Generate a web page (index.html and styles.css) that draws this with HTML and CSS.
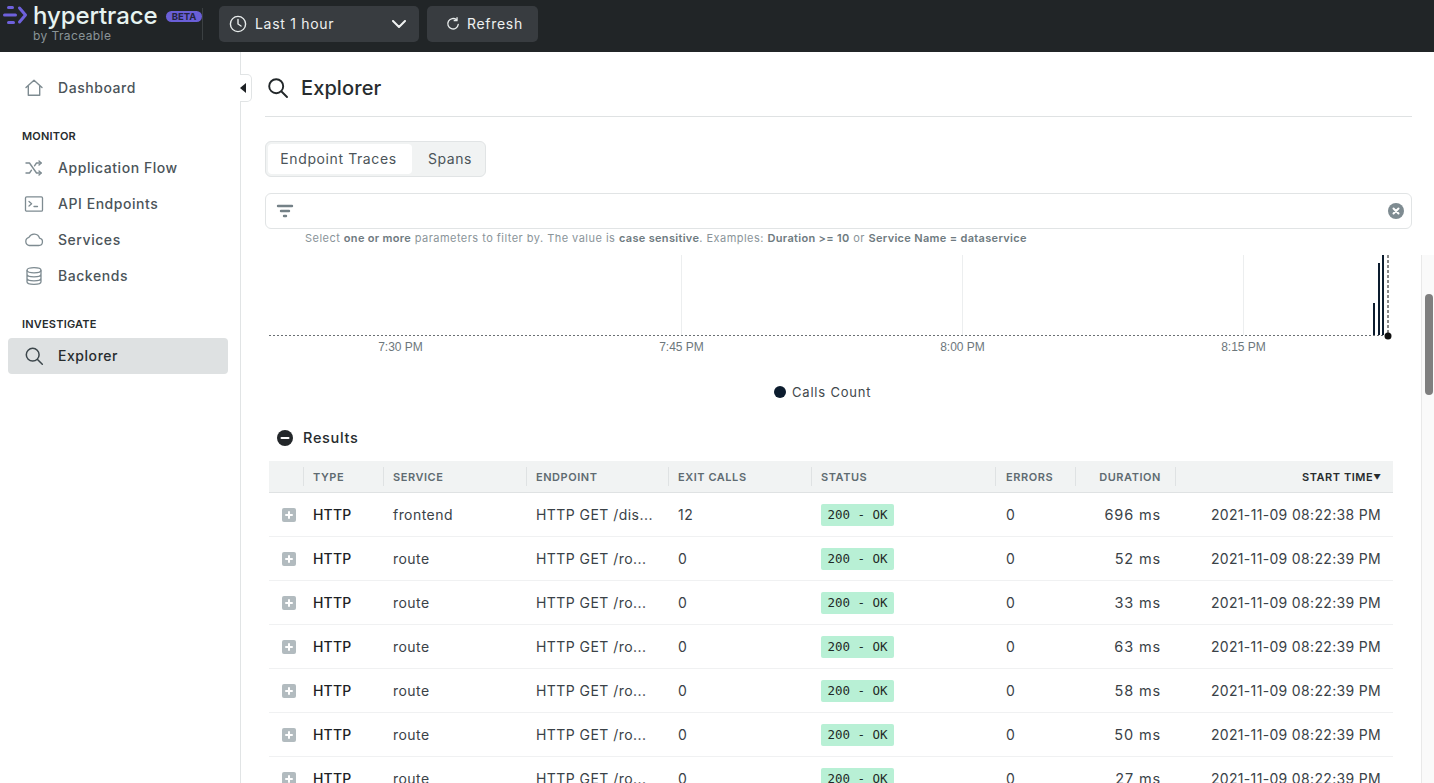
FILE: index.html
```html
<!DOCTYPE html>
<html lang="en">
<head>
<meta charset="utf-8">
<title>Hypertrace Explorer</title>
<link rel="stylesheet" href="styles.css">
</head>
<body>
<header class="topbar">
  <div class="brand">
    <svg class="brand-mark" viewBox="0 0 26 20" width="26" height="20"><g fill="none" stroke="#6e61dc" stroke-width="3" stroke-linecap="round" stroke-linejoin="round"><path d="M5.5 2.5h4"/><path d="M1.5 10h11"/><path d="M5.5 17.5h5"/><path d="M16.5 3l6 7-6 7"/></g></svg>
    <div class="brand-text">
      <div class="brand-name">hypertrace</div>
      <div class="brand-by">by Traceable</div>
    </div>
    <span class="beta">BETA</span>
  </div>
  <button class="top-btn time-btn">
    <svg viewBox="0 0 18 18" width="18" height="18"><g fill="none" stroke="#e8ecec" stroke-width="1.4" stroke-linecap="round"><circle cx="9" cy="9" r="7.6"/><path d="M9 4.5V9l3 2"/></g></svg>
    <span class="time-label">Last 1 hour</span>
    <svg viewBox="0 0 14 8" width="14" height="8"><path d="M1 1l6 6 6-6" fill="none" stroke="#f0f2f2" stroke-width="2" stroke-linecap="round" stroke-linejoin="round"/></svg>
  </button>
  <button class="top-btn refresh-btn">
    <svg viewBox="0 0 16 16" width="14" height="14"><g fill="none" stroke="#e8ecec" stroke-width="1.5" stroke-linecap="round"><path d="M14 8.5A6 6 0 1 1 12 3.2"/><path d="M12.6 .8v3.4H9.4" stroke-linejoin="round"/></g></svg>
    <span class="btn-text">Refresh</span>
  </button>
</header>

<div class="shell">
  <nav class="sidenav">
    <a class="nav-item">
      <svg class="nav-icon" viewBox="0 0 20 20"><path d="M2 9.5L10 2.2l8 7.3M4.3 8v9.3h11.4V8" fill="none" stroke="#7e8b91" stroke-width="1.4" stroke-linejoin="round" stroke-linecap="round"/></svg>
      <span>Dashboard</span>
    </a>
    <div class="nav-title nav-title-monitor">MONITOR</div>
    <a class="nav-item">
      <svg class="nav-icon" viewBox="0 0 20 20"><g fill="none" stroke="#7e8b91" stroke-width="1.4" stroke-linecap="round" stroke-linejoin="round"><path d="M2 5h3.5l7 10H17"/><path d="M2 15h3.5l2-2.8M10.5 7.8L12.5 5H17"/><path d="M15 3l2.2 2L15 7M15 13l2.2 2-2.2 2"/></g></svg>
      <span>Application Flow</span>
    </a>
    <a class="nav-item">
      <svg class="nav-icon" viewBox="0 0 20 20"><g fill="none" stroke="#7e8b91" stroke-width="1.3" stroke-linecap="round" stroke-linejoin="round"><rect x="1.5" y="2.8" width="17" height="14.4" rx="1.2"/><path d="M5 7.5l2.6 2.3L5 12M10 12.5h3.5"/></g></svg>
      <span>API Endpoints</span>
    </a>
    <a class="nav-item">
      <svg class="nav-icon" viewBox="0 0 20 20"><path d="M5.2 15.5h9.6a3.7 3.7 0 0 0 .8-7.3A5.7 5.7 0 0 0 5 7.3a4.2 4.2 0 0 0 .2 8.2z" fill="none" stroke="#7e8b91" stroke-width="1.3" stroke-linejoin="round"/></svg>
      <span>Services</span>
    </a>
    <a class="nav-item">
      <svg class="nav-icon" viewBox="0 0 20 20"><g fill="none" stroke="#7e8b91" stroke-width="1.3"><ellipse cx="10" cy="4.3" rx="7" ry="2.6"/><path d="M3 4.3v11.4c0 1.4 3.1 2.6 7 2.6s7-1.2 7-2.6V4.3M3 8.2c0 1.4 3.1 2.6 7 2.6s7-1.2 7-2.6M3 12.2c0 1.4 3.1 2.6 7 2.6s7-1.2 7-2.6"/></g></svg>
      <span>Backends</span>
    </a>
    <div class="nav-title nav-title-investigate">INVESTIGATE</div>
    <a class="nav-item active">
      <svg class="nav-icon" viewBox="0 0 20 20"><g fill="none" stroke="#3c464b" stroke-width="1.5" stroke-linecap="round"><circle cx="8.7" cy="8.7" r="6.4"/><path d="M13.5 13.5l4.8 4.8"/></g></svg>
      <span>Explorer</span>
    </a>
  </nav>
  <div class="nav-toggle"><span class="nav-toggle-arrow"></span></div>

  <main class="content">
    <div class="content-top">
      <div class="page-head">
        <svg viewBox="0 0 20 20" width="20" height="20"><g fill="none" stroke="#22272a" stroke-width="1.9" stroke-linecap="round"><circle cx="8.2" cy="8.2" r="7"/><path d="M13.5 13.5l5.5 5.5"/></g></svg>
        <h1>Explorer</h1>
      </div>
      <div class="tabs">
        <div class="tab tab-active">Endpoint Traces</div>
        <div class="tab tab-other">Spans</div>
      </div>
      <div class="filter">
        <svg viewBox="0 0 18 14" width="18" height="14"><g stroke="#748187" stroke-width="2.4" stroke-linecap="round"><path d="M2 2h14"/><path d="M5 7h8"/><path d="M8 12h2"/></g></svg>
        <svg viewBox="0 0 16 16" width="16" height="16"><circle cx="8" cy="8" r="8" fill="#7e8b91"/><path d="M5.5 5.5l5 5M10.5 5.5l-5 5" stroke="#fff" stroke-width="2" stroke-linecap="round"/></svg>
      </div>
      <p class="hint">Select <b>one or more</b> parameters to filter by. The value is <b>case sensitive</b>. Examples: <b>Duration &gt;= 10</b> or <b>Service Name = dataservice</b></p>
    </div>

    <div class="scroller">
      <svg class="chart" viewBox="0 0 1157 110" width="1157" height="110">
        <g stroke="#eceeef" stroke-width="1">
          <path d="M416.5 0v80M697.5 0v80M978.5 0v80"/>
        </g>
        <path d="M4 80.5H1123" stroke="#6a7074" stroke-width="1" stroke-dasharray="2 2"/>
        <g stroke="#0c1c2e" stroke-width="2">
          <path d="M1109 80V48M1114 80V8M1118 80V0"/>
        </g>
        <path d="M1123 0V80" stroke="#666" stroke-width="1.5" stroke-dasharray="3 2"/>
        <circle cx="1123" cy="81" r="3.5" fill="#111"/>
        <g class="axis-label" text-anchor="middle">
          <text x="135.5" y="96">7:30 PM</text>
          <text x="416.5" y="96">7:45 PM</text>
          <text x="697.5" y="96">8:00 PM</text>
          <text x="978.5" y="96">8:15 PM</text>
        </g>
      </svg>
      <div class="legend"><span class="legend-dot"></span><span>Calls Count</span></div>
      <div class="results-title">
        <svg viewBox="0 0 16 16" width="16" height="16"><circle cx="8" cy="8" r="8" fill="#23272a"/><path d="M4.5 8h7" stroke="#fff" stroke-width="2" stroke-linecap="round"/></svg>
        <span>Results</span>
      </div>
      <table class="grid">
        <colgroup>
          <col class="c-exp"><col class="c-type"><col class="c-svc"><col class="c-end"><col class="c-exit"><col class="c-status"><col class="c-err"><col class="c-dur"><col class="c-start">
        </colgroup>
        <thead>
          <tr>
            <th></th><th class="sep">TYPE</th><th class="sep">SERVICE</th><th class="sep">ENDPOINT</th><th class="sep">EXIT CALLS</th><th class="sep">STATUS</th><th class="sep">ERRORS</th><th class="sep num">DURATION</th><th class="sep num sorted">START TIME<span class="sort-arrow">▼</span></th>
          </tr>
        </thead>
        <tbody>
          <tr><td class="ctl"><span class="exp"></span></td><td class="type">HTTP</td><td>frontend</td><td>HTTP GET /dis...</td><td>12</td><td class="ctl"><span class="chip">200 - OK</span></td><td>0</td><td class="num dur">696 ms</td><td class="num time">2021-11-09 08:22:38 PM</td></tr>
          <tr><td class="ctl"><span class="exp"></span></td><td class="type">HTTP</td><td>route</td><td>HTTP GET /ro...</td><td>0</td><td class="ctl"><span class="chip">200 - OK</span></td><td>0</td><td class="num dur">52 ms</td><td class="num time">2021-11-09 08:22:39 PM</td></tr>
          <tr><td class="ctl"><span class="exp"></span></td><td class="type">HTTP</td><td>route</td><td>HTTP GET /ro...</td><td>0</td><td class="ctl"><span class="chip">200 - OK</span></td><td>0</td><td class="num dur">33 ms</td><td class="num time">2021-11-09 08:22:39 PM</td></tr>
          <tr><td class="ctl"><span class="exp"></span></td><td class="type">HTTP</td><td>route</td><td>HTTP GET /ro...</td><td>0</td><td class="ctl"><span class="chip">200 - OK</span></td><td>0</td><td class="num dur">63 ms</td><td class="num time">2021-11-09 08:22:39 PM</td></tr>
          <tr><td class="ctl"><span class="exp"></span></td><td class="type">HTTP</td><td>route</td><td>HTTP GET /ro...</td><td>0</td><td class="ctl"><span class="chip">200 - OK</span></td><td>0</td><td class="num dur">58 ms</td><td class="num time">2021-11-09 08:22:39 PM</td></tr>
          <tr><td class="ctl"><span class="exp"></span></td><td class="type">HTTP</td><td>route</td><td>HTTP GET /ro...</td><td>0</td><td class="ctl"><span class="chip">200 - OK</span></td><td>0</td><td class="num dur">50 ms</td><td class="num time">2021-11-09 08:22:39 PM</td></tr>
          <tr><td class="ctl"><span class="exp"></span></td><td class="type">HTTP</td><td>route</td><td>HTTP GET /ro...</td><td>0</td><td class="ctl"><span class="chip">200 - OK</span></td><td>0</td><td class="num dur">27 ms</td><td class="num time">2021-11-09 08:22:39 PM</td></tr>
        </tbody>
      </table>
      <div class="scrollbar"><div class="scrollbar-thumb"></div></div>
    </div>
  </main>
</div>
</body>
</html>
```

FILE: styles.css
```css
* { box-sizing: border-box; }
html, body { height: 100%; }
body {
  margin: 0;
  height: 783px;
  overflow: hidden;
  display: flex;
  flex-direction: column;
  background: #fff;
  color: #272c2e;
  font-family: Inter, "Liberation Sans", sans-serif;
  font-size: 14px;
}

/* top bar */
.topbar {
  flex: 0 0 52px;
  display: flex;
  align-items: center;
  background: #212527;
  padding: 0 0 4px 3px;
}
.brand {
  display: flex;
  align-items: center;
  width: 200px;
  height: 32px;
  margin-right: 16px;
  border-right: 1px solid #3b4042;
  position: relative;
}
.brand-mark { margin-right: 4px; margin-top: -19px; }
.brand-text { display: flex; flex-direction: column; gap: 2px; margin-top: -2px; }
.brand-name {
  font-size: 24px;
  line-height: 24px;
  font-weight: 500;
  color: #e6f3f0;
  letter-spacing: -.1px;
}
.brand-by { font-size: 12px; line-height: 12px; color: #8a9497; letter-spacing: .4px; }
.beta {
  position: absolute;
  left: 163px;
  top: 3px;
  width: 36px;
  height: 11px;
  border-radius: 6px;
  background: #6a5fd7;
  color: #23243f;
  font-size: 9.5px;
  line-height: 11px;
  font-weight: 700;
  text-align: center;
}
.top-btn {
  display: flex;
  align-items: center;
  height: 36px;
  border: 0;
  border-radius: 5px;
  background: #383c40;
  color: #eef0f0;
  font: inherit;
  font-size: 14px;
  letter-spacing: .7px;
  padding: 0;
}
.time-btn { width: 200px; padding: 0 13px 0 10px; margin-right: 8px; }
.time-label { margin-left: 8px; flex: 1; text-align: left; padding-bottom: 2px; }
.btn-text { padding-bottom: 2px; }
.refresh-btn { width: 111px; padding-left: 19px; gap: 7px; }

/* shell */
.shell { flex: 1; display: flex; min-height: 0; position: relative; }
.sidenav {
  flex: 0 0 241px;
  border-right: 1px solid #e1e4e5;
  padding: 18px 12px 0 8px;
  display: flex;
  flex-direction: column;
}
.nav-item {
  display: flex;
  align-items: center;
  height: 36px;
  padding-left: 16px;
  gap: 14px;
  color: #4b5459;
  font-size: 14px;
  font-weight: 500;
  letter-spacing: .55px;
  border-radius: 4px;
}
.nav-item span { padding-bottom: 2px; }
.nav-item.active { background: #dee1e2; color: #272c2e; }
.nav-icon { width: 20px; height: 20px; flex: none; }
.nav-title {
  font-size: 11px;
  line-height: 14px;
  font-weight: 600;
  color: #272c2e;
  padding-left: 14px;
  letter-spacing: .2px;
}
.nav-title-monitor { margin-top: 23px; margin-bottom: 7px; }
.nav-title-investigate { margin-top: 23px; margin-bottom: 7px; }

.nav-toggle {
  position: absolute;
  left: 240px;
  top: 22px;
  width: 12px;
  height: 28px;
  background: #fff;
  border: 1px solid #e1e4e5;
  border-left: 0;
  border-radius: 0 5px 5px 0;
  display: flex;
  align-items: center;
}
.nav-toggle-arrow {
  width: 0;
  height: 0;
  border: 5px solid transparent;
  border-left: 0;
  border-right: 6px solid #1d2124;
}

/* main */
.content { flex: 1; min-width: 0; display: flex; flex-direction: column; }
.content-top { padding: 0 22px 0 24px; height: 203px; flex: none; }
.page-head {
  display: flex;
  align-items: center;
  gap: 13px;
  height: 65px;
  padding: 7px 0 0 3px;
  border-bottom: 1px solid #dfe2e3;
  margin-bottom: 24px;
}
.page-head h1 {
  margin: 0;
  font-size: 20px;
  font-weight: 500;
  letter-spacing: .1px;
  padding-top: 1px;
  color: #272c2e;
}
.tabs {
  display: inline-flex;
  width: 221px;
  height: 36px;
  padding: 2px;
  background: #f1f3f3;
  border: 1px solid #e1e4e5;
  border-radius: 6px;
  font-size: 14px;
  color: #4b5459;
  letter-spacing: .6px;
}
.tab { display: flex; align-items: center; justify-content: center; border-radius: 4px; padding-bottom: 2px; }
.tab-active { width: 144px; background: #fff; padding-right: 3px; }
.tab-other { flex: 1; padding-left: 5px; }
.filter {
  display: flex;
  align-items: center;
  justify-content: space-between;
  height: 36px;
  margin-top: 16px;
  padding: 0 7px 0 10px;
  border: 1px solid #e1e4e5;
  border-radius: 6px;
}
.hint {
  margin: 3px 0 0 40px;
  font-size: 11px;
  line-height: 13px;
  letter-spacing: .47px;
  color: #8a9499;
}
.hint b { font-weight: 600; color: #6e7a80; letter-spacing: .32px; }

.scroller { flex: 1; min-height: 0; overflow: hidden; position: relative; padding-left: 24px; }
.chart { display: block; }
.axis-label { font-family: "Liberation Sans", Arial, sans-serif; font-size: 12px; fill: #6d777c; }
.legend {
  display: flex;
  align-items: center;
  gap: 6px;
  margin: 20px 0 0 509px;
  height: 14px;
  font-size: 13px;
  letter-spacing: .8px;
  color: #3f484c;
}
.legend-dot { width: 12px; height: 12px; border-radius: 50%; background: #0c1c2e; }
.results-title {
  display: flex;
  align-items: center;
  gap: 10px;
  height: 20px;
  margin: 29px 0 13px 12px;
  font-size: 14.5px;
  font-weight: 500;
  letter-spacing: .7px;
}
.results-title span { padding-bottom: 2px; }
.grid {
  width: 1124px;
  margin-left: 4px;
  border-collapse: collapse;
  table-layout: fixed;
  font-size: 14px;
  letter-spacing: .45px;
  color: #3a4247;
}
.c-exp { width: 34px; }
.c-type { width: 80px; }
.c-svc { width: 143px; }
.c-end { width: 142px; }
.c-exit { width: 143px; }
.c-status { width: 184px; }
.c-err { width: 80px; }
.c-dur { width: 100px; }
.c-start { width: 218px; }
.grid th {
  height: 31px;
  padding: 2px 0 0 10px;
  background: #f1f3f3;
  border-bottom: 1px solid #dfe2e3;
  font-size: 11px;
  font-weight: 600;
  letter-spacing: .55px;
  color: #5f6b71;
  text-align: left;
  position: relative;
}
.grid th.sep::before {
  content: "";
  position: absolute;
  left: 0;
  top: 6px;
  bottom: 6px;
  width: 1px;
  background: #dfe2e3;
}
.grid th.num, .grid td.num { text-align: right; padding-right: 14px; }
.grid th.sorted { color: #272c2e; padding-right: 12px; }
.sort-arrow { font-size: 7.5px; letter-spacing: 0; vertical-align: 1px; }
.grid td {
  height: 44px;
  padding: 0 0 0 10px;
  border-bottom: 1px solid #f0f1f2;
  white-space: nowrap;
  overflow: hidden;
}
.grid td.ctl { padding-top: 2px; }
.grid th:nth-child(7), .grid td:nth-child(7) { padding-left: 11px; }
.grid td.time { padding-right: 12px; letter-spacing: .33px; }
.grid td.dur { font-size: 14.5px; letter-spacing: .85px; }
.grid td:first-child { padding-left: 13px; }
.grid td.type { font-weight: 500; letter-spacing: .2px; color: #1d2124; }
.exp {
  display: block;
  position: relative;
  width: 14px;
  height: 14px;
  border-radius: 2px;
  background: #b2bbbf;
}
.exp::before, .exp::after {
  content: "";
  position: absolute;
  background: #fff;
  border-radius: 1px;
}
.exp::before { left: 3px; top: 6px; width: 8px; height: 2px; }
.exp::after { left: 6px; top: 3px; width: 2px; height: 8px; }
.chip {
  display: inline-block;
  width: 73px;
  height: 22px;
  border-radius: 2px;
  background: #b8f0d5;
  color: #1f2a27;
  font-family: "DejaVu Sans Mono", "Liberation Mono", monospace;
  font-size: 12.5px;
  letter-spacing: 0;
  line-height: 22px;
  text-align: center;
  vertical-align: middle;
}
.scrollbar {
  position: absolute;
  right: 0;
  top: 0;
  bottom: 0;
  width: 13px;
  background: #fafafa;
  border-left: 1px solid #e9e9e9;
}
.scrollbar-thumb {
  position: absolute;
  left: 3px;
  right: 1px;
  top: 39px;
  height: 101px;
  border-radius: 5px;
  background: #7f7f7f;
}
```
